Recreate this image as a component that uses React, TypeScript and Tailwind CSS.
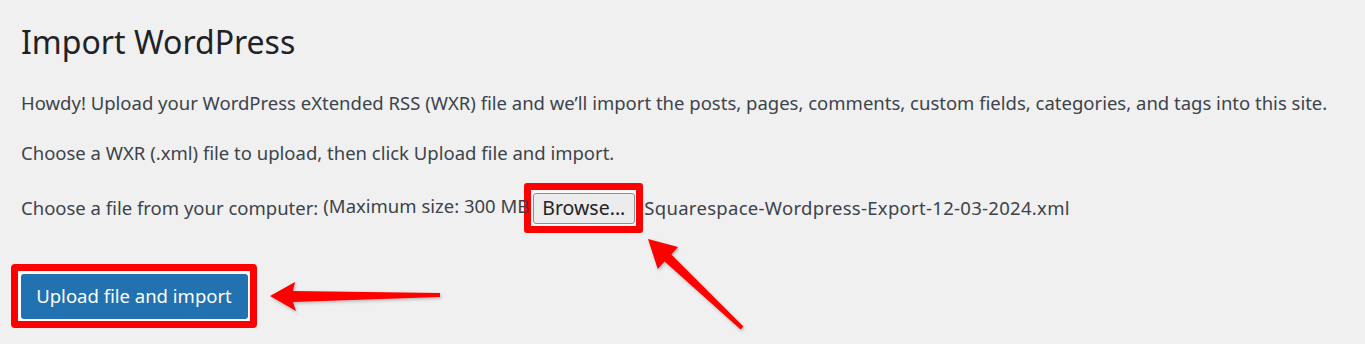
export default function App() {
  return (
    <div
      className="relative h-[344px] w-[1365px] overflow-hidden bg-[#f0f0f1] px-[21px] pt-[22px] text-[#3c434a]"
      style={{ fontFamily: '"Noto Sans", "Open Sans", sans-serif' }}
    >
      <h1 className="text-[32px] leading-[40px] font-normal text-[#1d2327]">Import WordPress</h1>

      <p className="mt-[29px] text-[18.5px] leading-[24px]">
        Howdy! Upload your WordPress eXtended RSS (WXR) file and we’ll import the posts, pages, comments, custom fields, categories, and tags into this site.
      </p>
      <p className="mt-[26px] text-[18.5px] leading-[24px]">
        Choose a WXR (.xml) file to upload, then click Upload file and import.
      </p>

      <div className="mt-[18px] flex h-[50px] items-center text-[18.5px] leading-[24px]">
        <span>Choose a file from your computer:</span>
        <span className="ml-[5px] -translate-y-[2px] whitespace-nowrap">(Maximum size: 300 MB</span>
        <div className="-ml-[5px] flex h-[50px] w-[119px] shrink-0 items-center justify-center rounded-[3px] border-[7px] border-[#f00] bg-[#fafafa]">
          <div className="flex h-[31px] w-[102px] items-center justify-center rounded-[3px] border border-[#8c8f94] bg-[#ececec] text-[19.5px] text-[#1d2327]">
            Browse...
          </div>
        </div>
        <span className="ml-[1px] tracking-[0.3px]">Squarespace-Wordpress-Export-12-03-2024.xml</span>
      </div>

      <div className="mt-[31px] -ml-[10px] flex h-[64px] w-[246px] items-center justify-center rounded-[4px] border-[7px] border-[#f00] bg-white">
        <div className="flex h-[45px] w-[227px] items-center justify-center rounded-[3px] bg-[#2271b1] text-[18.5px] text-white">
          Upload file and import
        </div>
      </div>

      <svg className="pointer-events-none absolute left-0 top-0" width="1365" height="344" viewBox="0 0 1365 344">
        <defs>
          <filter id="sh" x="-20%" y="-20%" width="140%" height="140%">
            <feDropShadow dx="1" dy="1.5" stdDeviation="1.5" floodColor="#000" floodOpacity="0.25" />
          </filter>
        </defs>
        <polygon
          points="270,296 295,282 293,291 440,293 440,297 293,302 296,311"
          fill="#f00"
          filter="url(#sh)"
        />
        <polygon
          points="648,239 678,247 671.4,254.4 743.4,326.5 740.6,329.5 664.6,261.6 657.7,269"
          fill="#f00"
          filter="url(#sh)"
        />
      </svg>
    </div>
  )
}
